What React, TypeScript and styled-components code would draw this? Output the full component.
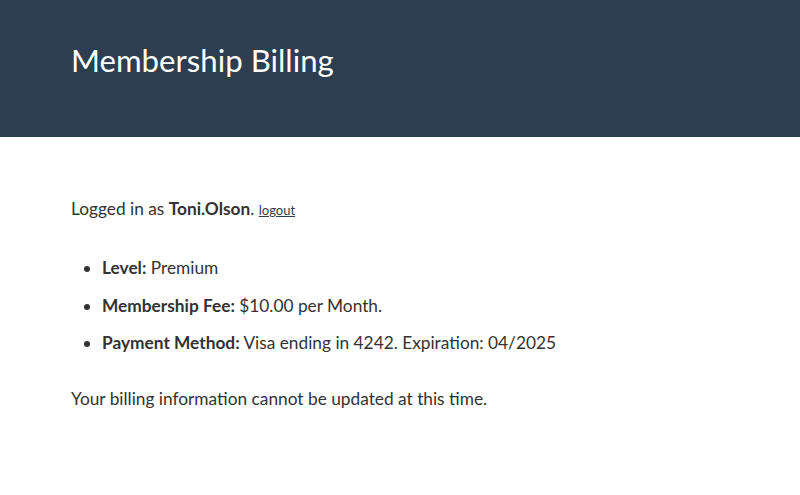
import React from 'react'
import styled, { createGlobalStyle } from 'styled-components'

const GlobalStyle = createGlobalStyle`
  html, body {
    margin: 0;
    padding: 0;
    background: #ffffff;
  }
  body {
    font-family: Lato, "Open Sans", sans-serif;
    color: #333333;
  }
`

const Header = styled.header`
  background-color: #2c3e50;
  height: 137px;
  padding: 0 71px;
  display: flex;
  align-items: center;
  box-sizing: border-box;
`

const Title = styled.h1`
  margin: 0 0 17px 0;
  font-size: 31.2px;
  font-weight: 400;
  color: #ffffff;
`

const Main = styled.main`
  padding: 59px 71px 0 71px;
  font-size: 17.3px;
  line-height: 26px;
`

const Para = styled.p`
  margin: 0;
`

const Logout = styled.a`
  font-size: 13px;
  color: #2c3e50;
  text-decoration: underline;
`

const List = styled.ul`
  margin: 32px 0 30px 0;
  padding-left: 31px;
`

const Item = styled.li`
  margin-bottom: 11.5px;
`

const App = () => {
  return (
    <>
      <GlobalStyle />
      <Header>
        <Title>Membership Billing</Title>
      </Header>
      <Main>
        <Para>
          Logged in as <strong>Toni.Olson</strong>. <Logout href="#">logout</Logout>
        </Para>
        <List>
          <Item><strong>Level:</strong> Premium</Item>
          <Item><strong>Membership Fee:</strong> $10.00 per Month.</Item>
          <Item><strong>Payment Method:</strong> Visa ending in 4242. Expiration: 04/2025</Item>
        </List>
        <Para>Your billing information cannot be updated at this time.</Para>
      </Main>
    </>
  )
}

export default App
